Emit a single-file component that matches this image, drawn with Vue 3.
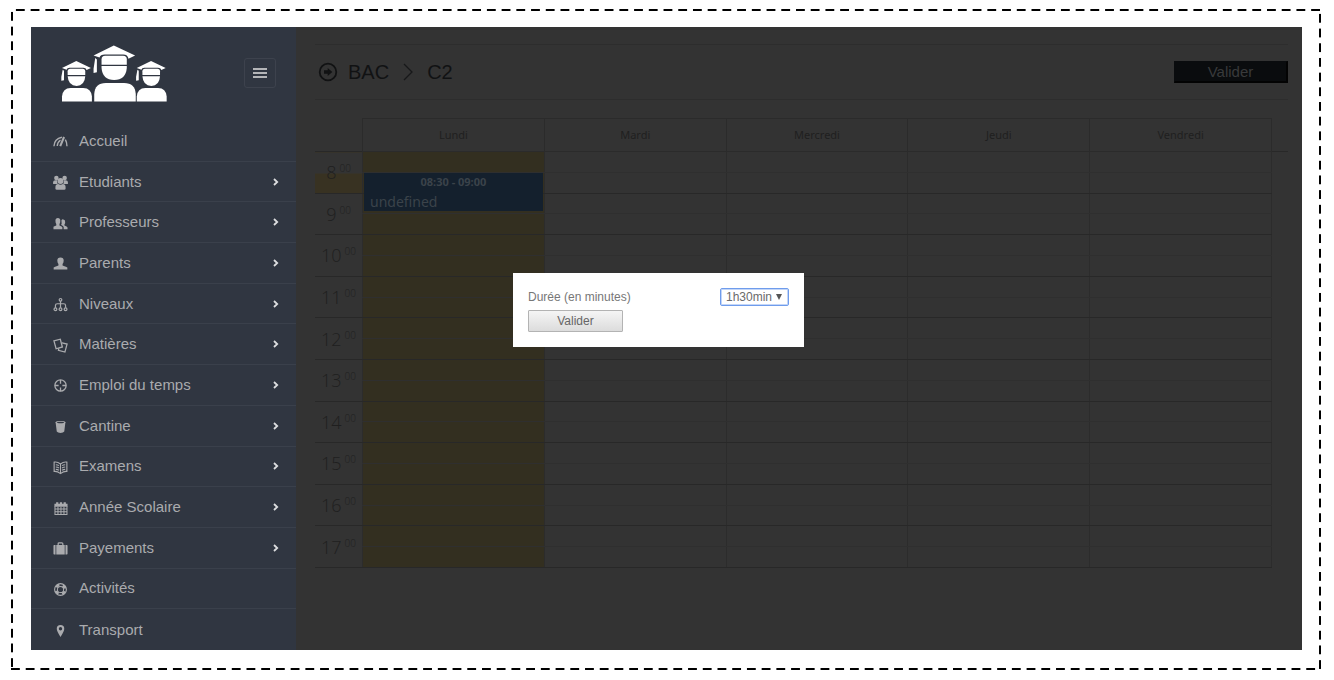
<script setup>
import { ref } from 'vue'

const items = [
  { label: 'Accueil', icon: 'gauge' },
  { label: 'Etudiants', icon: 'group', sub: true },
  { label: 'Professeurs', icon: 'users', sub: true },
  { label: 'Parents', icon: 'user', sub: true },
  { label: 'Niveaux', icon: 'tree', sub: true },
  { label: 'Matières', icon: 'docs', sub: true },
  { label: 'Emploi du temps', icon: 'clock', sub: true },
  { label: 'Cantine', icon: 'cup', sub: true },
  { label: 'Examens', icon: 'book', sub: true },
  { label: 'Année Scolaire', icon: 'calendar', sub: true },
  { label: 'Payements', icon: 'suitcase', sub: true },
  { label: 'Activités', icon: 'lifebuoy' },
  { label: 'Transport', icon: 'pin' },
]
const days = ['Lundi', 'Mardi', 'Mercredi', 'Jeudi', 'Vendredi']
const hours = [8, 9, 10, 11, 12, 13, 14, 15, 16, 17]
const duration = ref('1h30min')
</script>

<template>
  <div class="page">
    <div class="frame">
      <div class="app">
        <aside class="sidebar">
          <div class="brand">
            <svg class="logo" viewBox="183 135 319 171" role="img" aria-label="Logo">
              <g fill="#fff">
                <path d="M281 166 342 136 406 166 386 176Q384 163 370 163H315Q301 163 299 172Z" />
                <path d="M305 194V178Q305 167 316 167H370Q381 167 381 178V194Z" />
                <path d="M305 198H381V204Q378 240 343 240 308 240 305 204Z" />
                <path d="M286 174 291 178V217L281 219V206Z" />
                <path d="M283 305V282Q285 249 318 249H373Q406 249 408 282V305Z" />
                <g id="graduate">
                  <path d="M186 204 229 183 273 204 260 210Q258 203 250 203H209Q201 203 200 209Z" />
                  <path d="M203 225V214Q203 206 211 206H248Q256 206 256 214V225Z" />
                  <path d="M203 229H256Q254 258 230 258 205 258 203 229Z" />
                  <path d="M188 209 192 212V241L184 242V230Z" />
                  <path d="M186 305V290Q188 264 212 264H250Q274 264 276 290V305Z" />
                </g>
                <use href="#graduate" x="225" />
              </g>
            </svg>
            <button class="toggle" type="button" aria-label="Menu">
              <svg width="14" height="10" viewBox="0 0 14 10"><path d="M0 1H14M0 5H14M0 9H14" stroke="#b4b5b8" stroke-width="2" /></svg>
            </button>
          </div>
          <nav class="nav">
            <a v-for="it in items" :key="it.label" href="#" class="item">
              <svg class="icon" viewBox="0 0 16 16" fill="currentColor">
                <g v-if="it.icon === 'gauge'" fill="none" stroke="currentColor" stroke-width="1.5">
                  <path d="M1 13Q1.500 5 9.500 3.500M13.200 6Q14.900 9 14.900 13M4.500 12.800Q4.800 8.500 8 6.500" />
                  <path d="M11.800 3.200 7.700 13" stroke-width="2.200" />
                </g>
                <g v-else-if="it.icon === 'group'">
                  <circle cx="3.600" cy="3.200" r="2.400" /><circle cx="12.400" cy="3.200" r="2.400" />
                  <path d="M.1 9.500V7.500Q.3 5.600 2.500 5.600H4.500Q4 8 5 9.500ZM15.900 9.500V7.500Q15.700 5.600 13.500 5.600H11.500Q12 8 11 9.500Z" />
                  <circle cx="8" cy="6.400" r="3.200" />
                  <path d="M2.600 15V12.500Q2.800 9.600 5.500 9.600 8 11 10.500 9.600 13.200 9.600 13.400 12.500V15Q13.200 15.700 12 15.700H4Q2.800 15.700 2.600 15Z" />
                </g>
                <g v-else-if="it.icon === 'users'">
                  <path d="M.5 14V11.500Q1 10.800 3.500 10V8.500Q2.600 7.500 2.600 5 2.600 2 5.200 2 7.800 2 7.800 5 7.800 7.500 6.900 8.500V10Q9.800 11 10 12V14Z" />
                  <path d="M9 4.600Q9.600 3.400 11 3.600 13.200 3.800 13 6.500 13 8.300 12.200 9V10.200Q15.200 11.300 15.500 12.300V14H11.400V11.800Q11 10.800 8.900 9.700 8.400 9.200 9.200 8.200Z" />
                </g>
                <path v-else-if="it.icon === 'user'" d="M.7 14.500V12.300Q1.200 11.500 5.800 10V8.500Q4.600 7.200 4.600 4.800 4.600 1.500 8 1.500 11.400 1.500 11.400 4.800 11.400 7.200 10.200 8.500V10Q14.800 11.500 15.300 12.300V14.500Z" />
                <g v-else-if="it.icon === 'tree'" fill="none" stroke="currentColor" stroke-width="1.300">
                  <circle cx="8" cy="3" r="1.400" /><circle cx="2.600" cy="13" r="1.500" /><circle cx="8" cy="13" r="1.500" /><circle cx="13.400" cy="13" r="1.500" />
                  <path d="M8 4.300V11.500M2.600 11.500V9Q2.600 7.200 4.500 7.200H11.500Q13.400 7.200 13.400 9V11.500" />
                </g>
                <g v-else-if="it.icon === 'docs'" fill="none" stroke="currentColor" stroke-width="1.400">
                  <path d="M1 3 7.800 1.300 10 9.600 3.300 11.500Z" />
                  <path d="M9.500 5.200 15 6.500 12.700 15 5.800 13.200 6.200 11" />
                </g>
                <g v-else-if="it.icon === 'clock'" fill="none" stroke="currentColor" stroke-width="1.400">
                  <circle cx="8" cy="8" r="6" /><path d="M8 2V6M8 10V14M2 8H6M10 8H14" />
                </g>
                <g v-else-if="it.icon === 'cup'">
                  <path d="M2.800 3.500Q3 2 8 2 13 2 13.200 3.500L12 13.300Q11 14.800 8 14.800 5 14.800 4 13.300Z" />
                  <ellipse cx="8" cy="3.700" rx="3.900" ry=".8" fill="#303641" />
                </g>
                <g v-else-if="it.icon === 'book'" fill="none" stroke="currentColor" stroke-width="1.200">
                  <path d="M8 4.200Q4.500 1.500 1.200 2.300V12.200Q4.500 11.800 8 14.500 11.500 11.800 14.800 12.200V2.300Q11.500 1.500 8 4.200ZM8 4V14.500" />
                  <path d="M3 5Q5 5 6.300 6M3 7.500Q5 7.500 6.300 8.500M3 10Q5 10 6.300 11M13 5Q11 5 9.700 6M13 7.500Q11 7.500 9.700 8.500M13 10Q11 10 9.700 11" />
                </g>
                <g v-else-if="it.icon === 'calendar'">
                  <path d="M1.500 3H3.300V1.200H5.700V3H7.300V1.200H9.700V3H11.300V1.200H13.700V3H15.500V6H1.500Z" />
                  <path d="M2.100 5.500V14.400H14.900V5.500M2 8.600H15M2 11.500H15M5.300 6V14.500M8.500 6V14.500M11.700 6V14.500" fill="none" stroke="currentColor" stroke-width="1.100" />
                </g>
                <g v-else-if="it.icon === 'suitcase'">
                  <path d="M.5 5Q.5 4.200 1.300 4.200H2.700V14.500H1.300Q.5 14.500.5 13.700ZM15.500 5Q15.500 4.200 14.700 4.200H13.300V14.500H14.700Q15.500 14.500 15.500 13.700ZM3.500 4.200H12.500V14.500H3.500Z" />
                  <path d="M5.500 4.500V3Q5.500 1.900 6.600 1.900H9.400Q10.500 1.900 10.500 3V4.500" fill="none" stroke="currentColor" stroke-width="1.300" />
                </g>
                <g v-else-if="it.icon === 'lifebuoy'" fill="none" stroke="currentColor">
                  <circle cx="8" cy="8" r="6.300" stroke-width="1.200" /><circle cx="8" cy="8" r="3.300" stroke-width="1.100" />
                  <circle cx="8" cy="8" r="4.900" stroke-width="2.800" stroke-dasharray="3.850 3.850" stroke-dashoffset="5.770" />
                </g>
                <path v-else fill-rule="evenodd" d="M8 2Q12 2 12 6 12 8.500 8 14.800 4 8.500 4 6 4 2 8 2ZM8 4.300A1.800 1.800 0 1 0 8 7.900 1.800 1.800 0 1 0 8 4.300Z" />
              </svg>
              <span class="label">{{ it.label }}</span>
              <svg v-if="it.sub" class="chevron" viewBox="0 0 6 8"><path d="M1 1 4.200 4 1 7" fill="none" stroke="#dcdddf" stroke-width="1.800" /></svg>
            </a>
          </nav>
        </aside>

        <main class="content">
          <header class="bar">
            <h1 class="title">
              <svg width="20" height="20" viewBox="0 0 20 20">
                <circle cx="10" cy="10" r="8.300" fill="none" stroke="#111213" stroke-width="1.800" />
                <path d="M6 8.300H9.700V6L14.300 10 9.700 14V11.700H6Z" fill="#111213" />
              </svg>
              <span>BAC</span>
              <svg class="sep" width="10" height="18" viewBox="0 0 10 18"><path d="M1 1 9 9 1 17" fill="none" stroke="#171819" stroke-width="1.300" /></svg>
              <span>C2</span>
            </h1>
            <button class="submit" type="button">Valider</button>
          </header>

          <div class="schedule">
            <table class="calendar">
              <thead>
                <tr>
                  <th class="corner"></th>
                  <th v-for="d in days" :key="d" scope="col" class="day">{{ d }}</th>
                  <th class="gutter"></th>
                </tr>
              </thead>
              <tbody>
                <template v-for="h in hours" :key="h">
                  <tr class="hour">
                    <th rowspan="2" scope="row" class="time" :class="{ marked: h === 8 }">{{ h }}<sup>00</sup></th>
                    <td v-for="d in days" :key="d" :class="{ today: d === 'Lundi' }"></td>
                  </tr>
                  <tr class="half">
                    <td v-for="d in days" :key="d" :class="{ today: d === 'Lundi' }">
                      <div v-if="h === 8 && d === 'Lundi'" class="event">
                        <strong>08:30 - 09:00</strong>
                        <span>undefined</span>
                      </div>
                    </td>
                  </tr>
                </template>
              </tbody>
            </table>
          </div>
        </main>

        <form class="dialog" role="dialog" aria-label="Durée" @submit.prevent>
          <div class="field">
            <label for="duration">Durée (en minutes)</label>
            <span class="picker">
              <select id="duration" v-model="duration">
                <option>30min</option>
                <option>1h</option>
                <option>1h30min</option>
                <option>2h</option>
              </select>
              <svg class="arrow" viewBox="0 0 6 6"><path d="M0 0H6L3 6Z" fill="#555" /></svg>
            </span>
          </div>
          <button class="ok" type="submit">Valider</button>
        </form>
      </div>
    </div>
  </div>
</template>

<style>
body {
  background: #fff;
}
</style>

<style scoped>
.page {
  box-sizing: border-box;
  min-height: 100vh;
  padding: 9px 13px 10px 11px;
  display: flex;
  font-family: "Liberation Sans", Arial, sans-serif;
}
.frame {
  flex: 1;
  display: flex;
  padding: 18px 19px 20px 20px;
  background:
    linear-gradient(90deg, transparent 5px, #000 5px 14px, transparent 14px) 0 0 / calc(100% / 89) 2px repeat-x,
    linear-gradient(90deg, #000 9px, transparent 9px) 0 100% / calc(100% / 89) 2px repeat-x,
    linear-gradient(transparent 3px, #000 3px 12px, transparent 12px) 0 0 / 2px calc(100% / 45) repeat-y,
    linear-gradient(transparent 5px, #000 5px 14px, transparent 14px) 100% 0 / 2px calc(100% / 45) repeat-y;
}
.app {
  position: relative;
  flex: 1;
  display: flex;
  background: #333;
}
.sidebar {
  flex: 0 0 265px;
  display: flex;
  flex-direction: column;
  background: #303641;
}
.brand {
  box-sizing: border-box;
  height: 94px;
  padding: 18px 20px 0 30px;
  display: flex;
  justify-content: space-between;
  align-items: flex-start;
}
.logo {
  width: 106px;
  height: 57px;
}
.toggle {
  width: 32px;
  height: 30px;
  margin-top: 13px;
  padding: 0;
  display: flex;
  align-items: center;
  justify-content: center;
  background: none;
  border: 1px solid #3d424d;
  border-radius: 3px;
}
.nav {
  flex: 1;
  display: grid;
  grid-auto-rows: 1fr;
}
.item {
  display: flex;
  align-items: center;
  gap: 11px;
  padding: 0 17px 0 22px;
  border-bottom: 1px solid #3a404b;
  color: #aaabae;
  font-size: 15px;
  line-height: 20px;
  text-decoration: none;
}
.item:last-child {
  border-bottom: 0;
}
.icon {
  width: 15px;
  height: 15px;
  margin-top: 2px;
}
.label {
  flex: 1;
}
.chevron {
  width: 6px;
  height: 8px;
}
.content {
  flex: 1;
  min-width: 0;
  padding: 17px 14px 0 19px;
}
.bar {
  box-sizing: border-box;
  height: 56px;
  display: flex;
  justify-content: space-between;
  align-items: center;
  border-top: 1px solid #2d2d2d;
  border-bottom: 1px solid #2d2d2d;
}
.title {
  margin: 0;
  padding-left: 3px;
  display: flex;
  align-items: center;
  gap: 10px;
  color: #111213;
  font-size: 20px;
  font-weight: 400;
  line-height: 24px;
}
.sep {
  margin: 0 4px;
}
.submit {
  width: 114px;
  height: 22px;
  padding: 0;
  background: #0a0c0e;
  border: 1px solid #0a0c0e;
  border-right: 2px solid #030303;
  border-bottom: 2px solid #030303;
  color: #393a3b;
  font: 15px/18px "Liberation Sans", Arial, sans-serif;
}
.schedule {
  margin-top: 18px;
}
.calendar {
  width: 100%;
  height: 450px;
  table-layout: fixed;
  border-collapse: collapse;
  font-family: "Noto Sans", "Open Sans", sans-serif;
  color: #1f1f1f;
}
.calendar th,
.calendar td {
  padding: 0;
  line-height: 16px;
}
.corner {
  width: 47px;
}
.gutter {
  width: 16px;
}
.calendar thead tr {
  height: 33px;
  border-bottom: 1px solid #282828;
}
.calendar .day {
  border: 1px solid #2b2b2b;
  font-size: 11px;
  font-weight: 400;
}
.calendar td {
  border: 1px solid #2c2c2c;
}
.calendar .hour td {
  border-top-color: #282828;
  border-bottom-color: #2f2f2f;
}
.calendar .half td {
  border-top-color: #2f2f2f;
  border-bottom-color: #282828;
}
.calendar .time {
  border-top: 1px solid #282828;
  border-bottom: 1px solid #282828;
  font-family: "Open Sans", "Noto Sans", sans-serif;
  font-size: 18px;
  font-weight: 300;
  white-space: nowrap;
}
.time sup {
  margin-left: 3px;
  font-size: 10px;
  line-height: 0;
}
.calendar .marked {
  background: linear-gradient(transparent 50%, #383222 50%);
}
.calendar .today {
  position: relative;
  background: #332f20;
}
.event {
  position: absolute;
  z-index: 1;
  top: 0;
  left: 1px;
  right: 1px;
  height: 38px;
  display: flex;
  flex-direction: column;
  background: #14202d;
  color: #3b434a;
}
.event strong {
  font-size: 11px;
  line-height: 18px;
  text-align: center;
}
.event span {
  padding-left: 6px;
  font-size: 14px;
  line-height: 22px;
}
.dialog {
  position: absolute;
  top: 246px;
  left: calc(38% - 1px);
  box-sizing: border-box;
  width: 291px;
  padding: 15px;
  background: #fff;
  color: #777;
  font-size: 12px;
}
.field {
  display: flex;
  justify-content: space-between;
  align-items: center;
  margin-bottom: 4px;
}
.picker {
  position: relative;
  display: flex;
}
.picker select {
  appearance: none;
  width: 69px;
  height: 18px;
  padding: 0 0 0 5px;
  border: 1px solid #6f9cec;
  border-radius: 2px;
  background: #fff;
  box-shadow: inset 0 0 0 1px #c3d6f8;
  color: #6a6a6a;
  font: 12px/14px "Liberation Sans", Arial, sans-serif;
}
.arrow {
  position: absolute;
  top: 6px;
  right: 7px;
  width: 6px;
  height: 6px;
  pointer-events: none;
}
.ok {
  display: block;
  width: 95px;
  height: 22px;
  padding: 0;
  border: 1px solid #b3b3b3;
  border-radius: 1px;
  background: linear-gradient(#f5f5f5, #dcdcdc);
  color: #666;
  font: 12px/18px "Liberation Sans", Arial, sans-serif;
}
</style>
